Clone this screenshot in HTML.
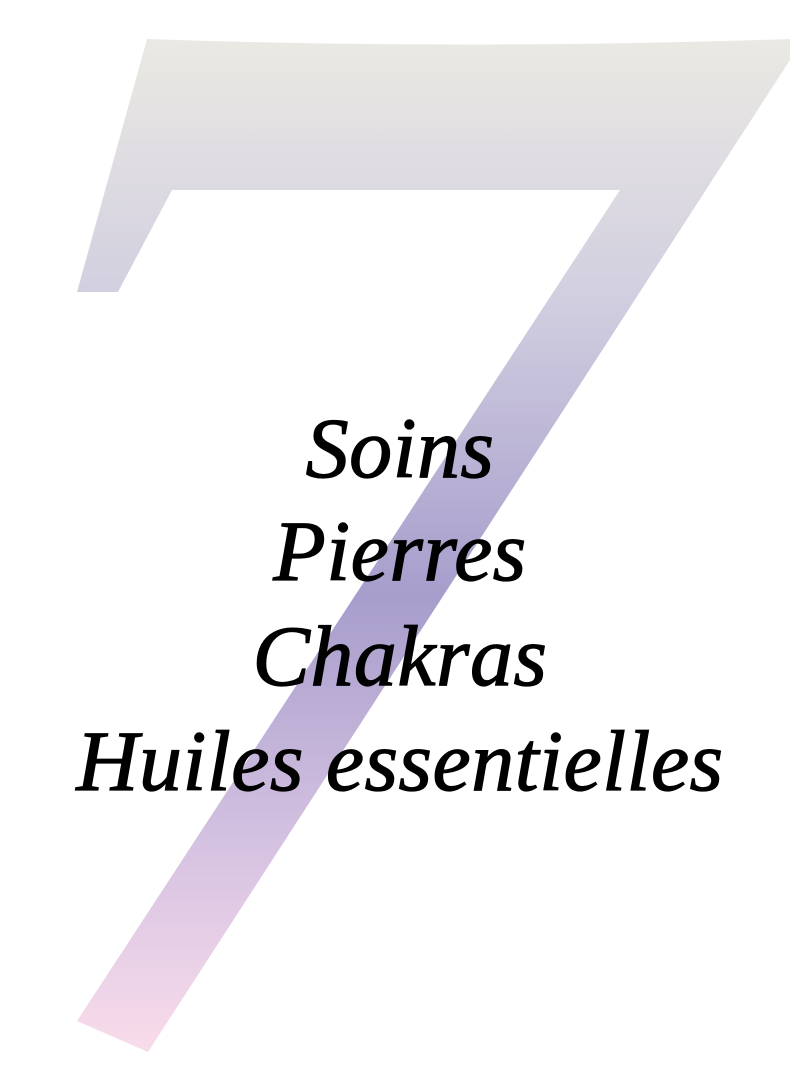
<!DOCTYPE html>
<html><head><meta charset="utf-8"><style>
html,body{margin:0;padding:0;background:#fff;}
body{width:800px;height:1074px;position:relative;overflow:hidden;}
svg{position:absolute;left:0;top:0;}
.t{position:absolute;left:0;width:800px;text-align:center;font-family:"Liberation Serif",serif;font-style:italic;font-size:86px;color:#000;line-height:1;white-space:nowrap;-webkit-text-stroke:1.2px #000;letter-spacing:0.5px;}
</style></head><body>
<svg width="800" height="1074" viewBox="0 0 800 1074">
<defs><linearGradient id="g" x1="0" y1="39" x2="0" y2="1052" gradientUnits="userSpaceOnUse">
<stop offset="0" stop-color="#ebe9e3"/>
<stop offset="0.25" stop-color="#d2cfe0"/>
<stop offset="0.55" stop-color="#a79dcc"/>
<stop offset="0.8" stop-color="#d6c3e2"/>
<stop offset="1" stop-color="#f9dcea"/>
</linearGradient></defs>
<path d="M147 39 Q460 50 790 39 L790 60 L148 1052 L77 1021 L620 190 L172 190 L118 292 L77 292 Z" fill="url(#g)"/>
</svg>
<div class="t" style="top:405px">Soins</div>
<div class="t" style="top:508px">Pierres</div>
<div class="t" style="top:613px">Chakras</div>
<div class="t" style="top:718px">Huiles essentielles</div>
</body></html>
